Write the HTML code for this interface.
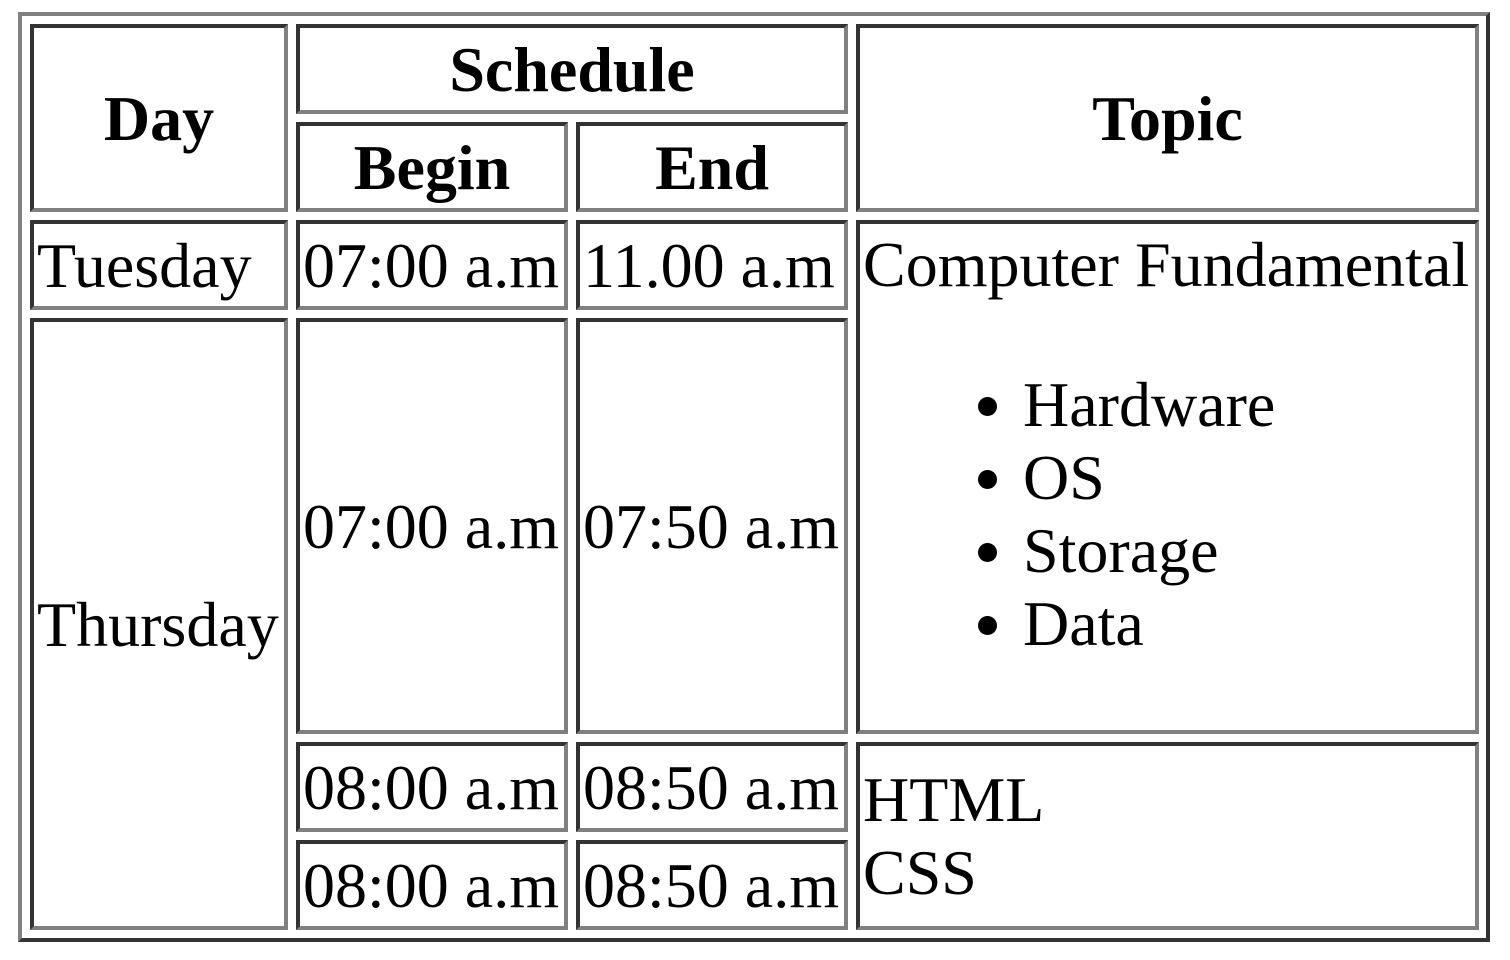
<!DOCTYPE html>
<html><head><style>
body{margin:0;width:1510px;height:960px;background:#fff;position:relative;overflow:hidden;font-family:"Liberation Serif",serif;font-size:64px;line-height:73px;color:#000}
.t{position:absolute;left:18px;top:12px;width:1464px;height:922px;border:4px solid;border-color:#808080 #333 #333 #808080}
.c{position:absolute;box-sizing:border-box;border:4px solid;border-color:#333 #808080 #808080 #333;padding:4px 3px;display:flex;align-items:center;white-space:nowrap}
.h{font-weight:bold;justify-content:center}
ul{margin:67px 0;padding-left:160px}
li{line-height:73px}
</style></head><body>
<div class="t"></div>
<div class="c h" style="left:30px;top:24px;width:258px;height:188px">Day</div>
<div class="c h" style="left:296px;top:24px;width:552px;height:90px">Schedule</div>
<div class="c h" style="left:296px;top:122px;width:272px;height:90px">Begin</div>
<div class="c h" style="left:576px;top:122px;width:272px;height:90px">End</div>
<div class="c h" style="left:856px;top:24px;width:623px;height:188px">Topic</div>

<div class="c" style="left:30px;top:220px;width:258px;height:90px">Tuesday</div>
<div class="c" style="left:296px;top:220px;width:272px;height:90px">07:00 a.m</div>
<div class="c" style="left:576px;top:220px;width:272px;height:90px">11.00 a.m</div>
<div class="c" style="left:856px;top:220px;width:623px;height:514px;display:block"><div>Computer Fundamental</div><ul><li>Hardware</li><li>OS</li><li>Storage</li><li>Data</li></ul></div>

<div class="c" style="left:30px;top:318px;width:258px;height:612px">Thursday</div>
<div class="c" style="left:296px;top:318px;width:272px;height:416px">07:00 a.m</div>
<div class="c" style="left:576px;top:318px;width:272px;height:416px">07:50 a.m</div>

<div class="c" style="left:296px;top:742px;width:272px;height:90px">08:00 a.m</div>
<div class="c" style="left:576px;top:742px;width:272px;height:90px">08:50 a.m</div>
<div class="c" style="left:296px;top:840px;width:272px;height:90px">08:00 a.m</div>
<div class="c" style="left:576px;top:840px;width:272px;height:90px">08:50 a.m</div>
<div class="c" style="left:856px;top:742px;width:623px;height:188px"><div>HTML<br>CSS</div></div>
</body></html>
